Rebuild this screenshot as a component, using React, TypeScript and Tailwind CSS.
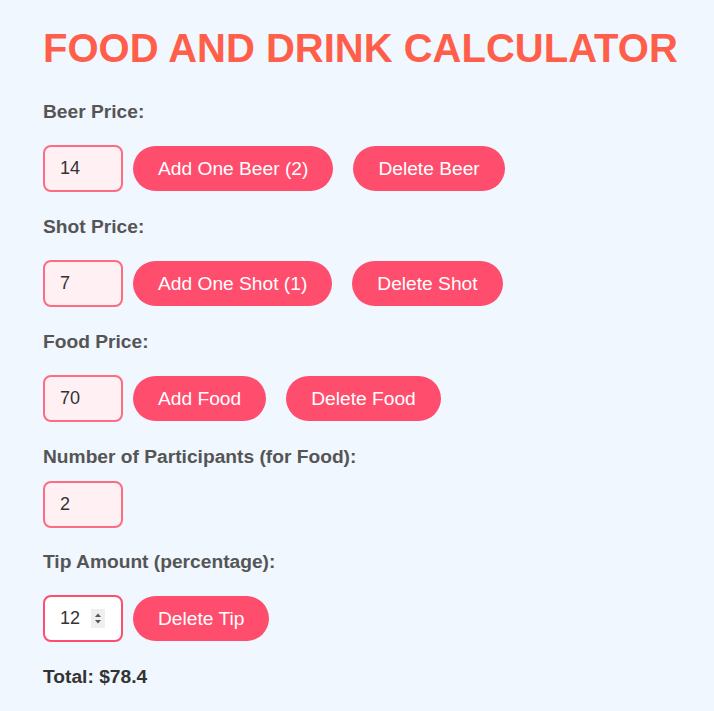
import { useState } from "react";

const btn =
  "h-[45px] whitespace-nowrap rounded-full bg-[#ff4d6d] px-[25px] text-[19.2px] leading-[22px] text-white";
const label = "block text-[19.2px] font-bold leading-[22px] text-[#555]";
const field =
  "h-[47px] w-[80px] rounded-[8px] border-2 border-[#ff6b81] bg-[#fff0f3] pl-[15px] text-[18px] text-[#333] outline-none";

const App = () => {
  const [beer, setBeer] = useState("14");
  const [shot, setShot] = useState("7");
  const [food, setFood] = useState("70");
  const [people, setPeople] = useState("2");
  const [tip, setTip] = useState("12");

  return (
    <div
      className="min-h-[711px] w-full bg-[#f0f7ff] pl-[43px] pt-[25px]"
      style={{ fontFamily: '"Liberation Sans", Arial, sans-serif' }}
    >
      <h1 className="text-[40px] font-bold leading-[46px] text-[#ff5f4a]">
        FOOD AND DRINK CALCULATOR
      </h1>

      <label className={`${label} mt-[30px]`}>Beer Price:</label>
      <div className="mt-[22px] flex items-center">
        <input className={field} value={beer} onChange={(e) => setBeer(e.target.value)} />
        <button className={`${btn} ml-[10px]`}>Add One Beer (2)</button>
        <button className={`${btn} ml-[20px]`}>Delete Beer</button>
      </div>

      <label className={`${label} mt-[24px]`}>Shot Price:</label>
      <div className="mt-[22px] flex items-center">
        <input className={field} value={shot} onChange={(e) => setShot(e.target.value)} />
        <button className={`${btn} ml-[10px]`}>Add One Shot (1)</button>
        <button className={`${btn} ml-[20px]`}>Delete Shot</button>
      </div>

      <label className={`${label} mt-[24px]`}>Food Price:</label>
      <div className="mt-[22px] flex items-center">
        <input className={field} value={food} onChange={(e) => setFood(e.target.value)} />
        <button className={`${btn} ml-[10px]`}>Add Food</button>
        <button className={`${btn} ml-[20px]`}>Delete Food</button>
      </div>

      <label className={`${label} mt-[24px]`}>Number of Participants (for Food):</label>
      <div className="mt-[13px] flex items-center">
        <input className={field} value={people} onChange={(e) => setPeople(e.target.value)} />
      </div>

      <label className={`${label} mt-[23px]`}>Tip Amount (percentage):</label>
      <div className="mt-[22px] flex items-center">
        <div className="relative">
          <input
            className="h-[47px] w-[80px] rounded-[8px] border-2 border-[#ff4d6d] bg-white pl-[15px] text-[18px] text-[#333] outline-none"
            value={tip}
            onChange={(e) => setTip(e.target.value)}
          />
          <span className="absolute left-[48px] top-[14px] flex h-[19px] w-[14px] items-center justify-center bg-[#efefef]">
            <svg width="8" height="13" viewBox="0 0 8 13">
              <path d="M4 1.5 L7 5 L1 5 Z" fill="#555" />
              <path d="M4 11.5 L7 8 L1 8 Z" fill="#555" />
            </svg>
          </span>
        </div>
        <button className={`${btn} ml-[10px]`}>Delete Tip</button>
      </div>

      <p className="mt-[24px] text-[19.2px] font-bold leading-[22px] text-[#333]">
        Total: $78.4
      </p>
    </div>
  );
};

export default App;
